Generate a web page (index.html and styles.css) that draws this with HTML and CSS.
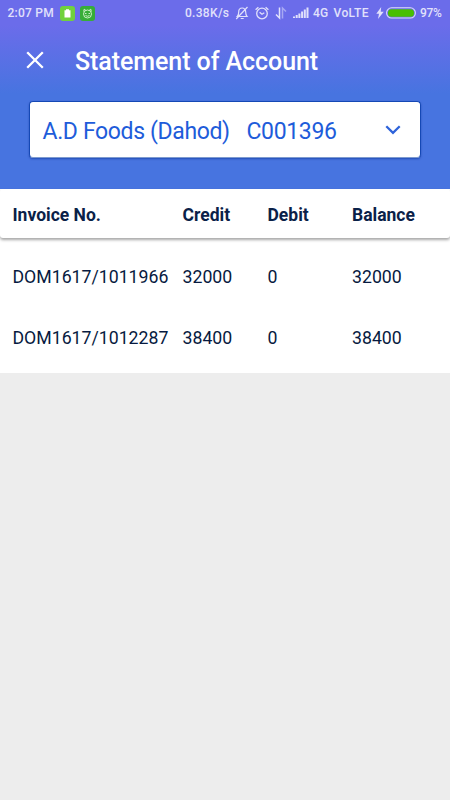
FILE: index.html
```html
<!DOCTYPE html>
<html lang="en">
<head>
<meta charset="utf-8">
<title>Statement of Account</title>
<link rel="stylesheet" href="styles.css">
</head>
<body>
<header class="header">
  <div class="status">
    <div class="status-left">
      <span class="clock">2:07 PM</span>
      <svg class="app-icon" width="15" height="15" viewBox="0 0 15 15"><rect width="15" height="15" rx="3" fill="#70d13c"/><path d="M6 3.200h3v1h1.500v7.300h-6V4.200H6z" fill="#fff"/></svg>
      <svg class="app-icon" width="15" height="15" viewBox="0 0 15 15"><rect width="15" height="15" rx="3" fill="#36ad38"/><g fill="none" stroke="#d9f5d4" stroke-width=".9"><circle cx="7.500" cy="8" r="4"/><path d="M3.700 5.500 4.200 3.200l1.600 1.100M11.300 5.500 10.800 3.200 9.200 4.300M5 7.500h1.500M8.500 7.500H10M5.500 9.500q2 1.500 4 0"/></g></svg>
    </div>
    <div class="status-right">
      <span class="speed">0.38K/s</span>
      <svg class="bell" width="14" height="14" viewBox="0 0 14 14"><g fill="none" stroke="#e1e1fb" stroke-width="1.200"><path d="M2.300 10.500h9.700c-1-1-1.300-2-1.300-4.500 0-2.300-1.500-4-3.500-4S3.700 3.700 3.700 6c0 2.500-.4 3.500-1.400 4.500zM5.700 12.500h3M1.200 13 12.500 1"/></g></svg>
      <svg class="alarm" width="14" height="14" viewBox="0 0 14 14"><g fill="none" stroke="#e1e1fb" stroke-width="1.300"><circle cx="7" cy="7.500" r="5.300"/><path d="M4.600 6.200 7 8.300l2.300-1.500M.6 3.700l2.800-2.500M13.400 3.700l-2.800-2.500"/></g></svg>
      <svg class="data" width="12" height="14" viewBox="0 0 12 14"><path d="M4.500 1.500v10.500L1 8.500" fill="none" stroke="#e1e1fb" stroke-width="1.500"/><path d="M7.500 12.500V2L11 5.500" fill="none" stroke="#a6a7f3" stroke-width="1.500"/></svg>
      <svg class="signal" width="16" height="12" viewBox="0 0 16 12"><path d="M0 11V9.500h2V11zM2.700 11V8h2v3zM5.400 11V6.500h2V11zM8.100 11V4.500h2V11zM10.800 11V2.500h2V11zM13.500 11V.5h2V11z" fill="#e1e1fb"/></svg>
      <span class="network">4G</span>
      <span class="volte">VoLTE</span>
      <svg class="bolt" width="8" height="12" viewBox="0 0 8 12"><path d="M5.200 0 .3 6.700H3L2 12 7.700 4.800H4.700z" fill="#e1e1fb"/></svg>
      <svg class="battery" width="30" height="12" viewBox="0 0 30 12"><rect x=".6" y=".8" width="28.800" height="10.200" rx="5" fill="none" stroke="#dcdcfa" stroke-width="1.100"/><rect x="2" y="2.200" width="26" height="7.500" rx="3.500" fill="#48bf03"/></svg>
      <span class="percent">97%</span>
    </div>
  </div>
  <div class="toolbar">
    <svg class="close" width="18" height="18" viewBox="0 0 18 18"><path d="M1.200 1.200 16.800 16.800M16.800 1.200 1.200 16.800" stroke="#fff" stroke-width="2.300"/></svg>
    <h1 class="title">Statement of Account</h1>
  </div>
  <div class="select">
    <span class="party">A.D Foods (Dahod)</span>
    <span class="code">C001396</span>
    <svg class="chevron" width="16" height="10" viewBox="0 0 16 10"><path d="M1.300 1.300 8 7.900l6.700-6.600" fill="none" stroke="#2e63da" stroke-width="2.300"/></svg>
  </div>
</header>
<main class="table">
  <div class="row head"><span>Invoice No.</span><span>Credit</span><span>Debit</span><span>Balance</span></div>
  <div class="rows">
    <div class="row"><span>DOM1617/1011966</span><span>32000</span><span>0</span><span>32000</span></div>
    <div class="row"><span>DOM1617/1012287</span><span>38400</span><span>0</span><span>38400</span></div>
  </div>
</main>
</body>
</html>
```
FILE: styles.css
```css
* { box-sizing: border-box; }
body {
  margin: 0;
  min-height: 800px;
  background: #ededed;
  font-family: Roboto, "Liberation Sans", sans-serif;
}
svg { display: block; flex: none; }
.header {
  height: 189.4px;
  background: linear-gradient(#6b6cea 0, #6b6cea 25px, #4774e0 94px);
}
.status {
  height: 26px;
  padding: 0 8px 0 7.5px;
  display: flex;
  align-items: center;
  justify-content: space-between;
  font-size: 12px;
  font-weight: 500;
  line-height: 26px;
  color: #e1e1fb;
  white-space: nowrap;
}
.status-left, .status-right { display: flex; align-items: center; }
.clock { width: 52.5px; letter-spacing: .25px; }
.app-icon { margin-right: 5px; }
.speed { width: 50px; letter-spacing: .3px; }
.alarm { margin-left: 6px; }
.data { margin-left: 6px; }
.signal { margin-left: 6px; }
.network { width: 20.5px; margin-left: 4px; letter-spacing: .2px; }
.volte { width: 42.5px; letter-spacing: .4px; }
.battery { margin-left: 2px; }
.percent { width: 22px; margin-left: 4px; letter-spacing: -.3px; }
.toolbar {
  height: 75px;
  padding: 0 26px 7px;
  display: flex;
  align-items: center;
}
.title {
  margin: 4px 0 0 31px;
  font-size: 25px;
  font-weight: 500;
  line-height: 32px;
  letter-spacing: -.07px;
  color: #fff;
  white-space: nowrap;
}
.select {
  height: 57px;
  margin: 0 29px;
  padding: 3px 19.5px 0 12.5px;
  display: flex;
  align-items: center;
  background: #fff;
  border: 1px solid #1548b5;
  border-bottom-color: #7e9bd0;
  border-radius: 4px;
  box-shadow: 0 1px 2px rgba(0, 40, 140, .5);
  font-size: 23px;
  letter-spacing: -.36px;
  color: #1e5cda;
  white-space: nowrap;
}
.party { width: 204px; }
.chevron { margin: -3px 0 0 auto; }
.table {
  height: 184px;
  background: #fff;
  color: #071a40;
}
.row {
  height: 61px;
  padding: 0 12px 0 12.5px;
  display: grid;
  grid-template-columns: 170px 85px 84.5px 1fr;
  align-items: center;
  font-size: 17.7px;
  white-space: nowrap;
}
.head {
  height: 49px;
  padding-top: 2px;
  background: #fff;
  border-radius: 3px;
  box-shadow: 0 2px 3px rgba(0, 0, 0, .35);
  font-size: 17.5px;
  font-weight: 700;
  color: #0a2148;
}
.rows { padding-top: 8px; }
```
